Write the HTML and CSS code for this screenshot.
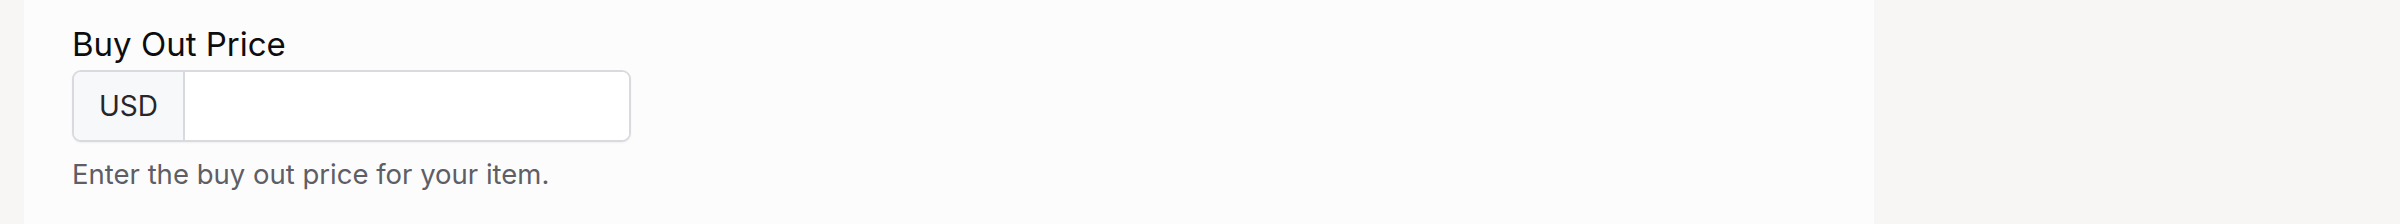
FILE: index.html
```html
<!DOCTYPE html>
<html lang="en">
<head>
    <meta charset="UTF-8">
    <meta name="viewport" content="width=device-width, initial-scale=1.0">
    <title>Buy Out Price</title>

    <!-- CSS Styles -->
    <link rel="stylesheet" href="styles.css">
</head>
<body>

    <div class="page">
        <div class="panel">
            <!-- Buy out price field -->
            <div class="field">
                <label class="field-label" for="buyout-input">Buy Out Price</label>
                <div class="input-group">
                    <span class="addon">USD</span>
                    <input type="text" id="buyout-input" class="price-input" />
                </div>
                <p class="help-text">Enter the buy out price for your item.</p>
            </div>
        </div>
    </div>

</body>
</html>
```

FILE: styles.css
```css
* {
    margin: 0;
    padding: 0;
    box-sizing: border-box;
}

body {
    font-family: 'Inter', 'Liberation Sans', sans-serif;
    background-color: #f7f6f5;
    color: #111;
}

.page {
    display: flex;
    min-height: 224px;
    padding-left: 24px;
}

.panel {
    width: 1850px;
    background-color: #fcfcfc;
    padding: 21px 48px 0 48px;
}

.field {
    display: flex;
    flex-direction: column;
    align-items: flex-start;
}

.field-label {
    font-size: 33px;
    line-height: 46px;
    color: #0d0d0f;
    margin-bottom: 3px;
}

.input-group {
    display: flex;
    width: 559px;
    height: 72px;
    border: 2px solid #d9dae0;
    border-radius: 9px;
    background-color: #fff;
    box-shadow: 0 1px 2px rgba(0, 0, 0, 0.05);
    overflow: hidden;
}

.addon {
    display: flex;
    align-items: center;
    padding: 0 25px;
    background-color: #f7f8fa;
    border-right: 2px solid #d9dae0;
    font-size: 28px;
    color: #26262c;
}

.price-input {
    flex: 1;
    border: none;
    outline: none;
    background: #fff;
    font-family: inherit;
    font-size: 28px;
    padding: 0 20px;
}

.help-text {
    margin-top: 13px;
    font-size: 27.5px;
    line-height: 38px;
    color: #5e5e66;
}
```
